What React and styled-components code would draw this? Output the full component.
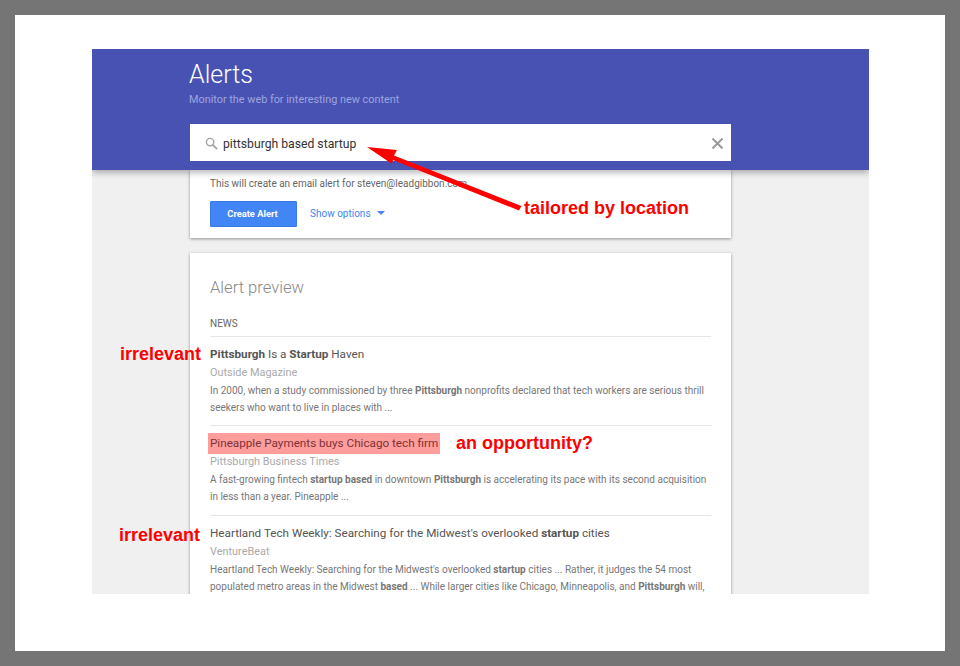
import styled, { createGlobalStyle } from 'styled-components'

const GlobalStyle = createGlobalStyle`
    html, body {
        margin: 0;
        padding: 0;
        background: #757575;
    }
    body {
        font-family: Roboto, "Liberation Sans", sans-serif;
    }
`

const items = [
    {
        title: <><b>Pittsburgh</b> Is a <b>Startup</b> Haven</>,
        source: 'Outside Magazine',
        text: <>In 2000, when a study commissioned by three <b>Pittsburgh</b> nonprofits declared that tech workers are serious thrill<br />seekers who want to live in places with ...</>,
        note: 'irrelevant',
        noteLeft: -90,
        noteTop: 7,
    },
    {
        title: 'Pineapple Payments buys Chicago tech firm',
        source: 'Pittsburgh Business Times',
        text: <>A fast-growing fintech <b>startup based</b> in downtown <b>Pittsburgh</b> is accelerating its pace with its second acquisition<br />in less than a year. Pineapple ...</>,
        highlight: true,
    },
    {
        title: <>Heartland Tech Weekly: Searching for the Midwest's overlooked <b>startup</b> cities</>,
        source: 'VentureBeat',
        text: <>Heartland Tech Weekly: Searching for the Midwest's overlooked <b>startup</b> cities ... Rather, it judges the 54 most<br />populated metro areas in the Midwest <b>based</b> ... While larger cities like Chicago, Minneapolis, and <b>Pittsburgh</b> will,</>,
        note: 'irrelevant',
        noteLeft: -91,
        noteTop: 9,
    },
]

const App = () => {
    return <Page>
        <GlobalStyle />
        <Sheet>
            <Shot>
                <Header>
                    <Title>Alerts</Title>
                    <Subtitle>Monitor the web for interesting new content</Subtitle>
                    <SearchBar>
                        <svg width="13" height="13" viewBox="0 0 14 14" fill="none" stroke="#a3a3a3">
                            <circle cx="5.5" cy="5.5" r="4" strokeWidth="1.5" />
                            <path d="M8.5 8.5 L13 13" strokeWidth="2" />
                        </svg>
                        <SearchText>pittsburgh based startup</SearchText>
                        <svg width="11" height="11" viewBox="0 0 11 11" stroke="#9a9a9a" strokeWidth="2">
                            <path d="M0.5 0.5 L10.5 10.5 M10.5 0.5 L0.5 10.5" />
                        </svg>
                    </SearchBar>
                </Header>
                <Body>
                    <OptionsCard>
                        <EmailLine>This will create an email alert for steven@leadgibbon.com</EmailLine>
                        <Actions>
                            <CreateButton>Create Alert</CreateButton>
                            <OptionsLink>Show options<Caret /></OptionsLink>
                        </Actions>
                    </OptionsCard>
                    <PreviewCard>
                        <PreviewTitle>Alert preview</PreviewTitle>
                        <Section>NEWS</Section>
                        {items.map((item) => (
                            <Item key={item.source}>
                                <ItemTitle $highlight={item.highlight}>{item.title}</ItemTitle>
                                {item.note && <SideNote $left={item.noteLeft} $top={item.noteTop}>{item.note}</SideNote>}
                                {item.highlight && <Opportunity>an opportunity?</Opportunity>}
                                <Source>{item.source}</Source>
                                <Snippet>{item.text}</Snippet>
                            </Item>
                        ))}
                    </PreviewCard>
                </Body>
            </Shot>
            <Arrow width="170" height="70" viewBox="0 0 170 70">
                <path d="M1 1 L31 4 L28 9.5 L155.5 60 L153 64.5 L27 14 L26 18 Z" fill="#ff0000" />
            </Arrow>
            <LocationNote>tailored by location</LocationNote>
        </Sheet>
    </Page>
}

const Page = styled.div`
    height: 666px;
    padding: 15px;
    box-sizing: border-box;
    overflow: hidden;
`

const Sheet = styled.div`
    position: relative;
    height: 636px;
    padding: 34px 76px 0 77px;
    box-sizing: border-box;
    background: #fff;
`

const Shot = styled.div`
    height: 545px;
    overflow: hidden;
    display: flex;
    flex-direction: column;
    background: #f0f0f0;
`

const Header = styled.header`
    position: relative;
    z-index: 1;
    height: 121px;
    flex: none;
    padding: 11px 0 0 97px;
    box-sizing: border-box;
    background: #4852b2;
    box-shadow: 0 3px 6px rgba(0, 0, 0, 0.28);
`

const Title = styled.h1`
    margin: 0;
    font-size: 25px;
    line-height: 30px;
    font-weight: 300;
    color: #fff;
`

const Subtitle = styled.p`
    margin: 2px 0 0;
    font-size: 10.85px;
    line-height: 16px;
    color: #9ea5e0;
`

const SearchBar = styled.div`
    display: flex;
    align-items: center;
    width: 541px;
    height: 37px;
    margin: 16px 0 0 1px;
    padding: 2px 8px 0 15px;
    box-sizing: border-box;
    background: #fff;
`

const SearchText = styled.span`
    flex: 1;
    margin-left: 5px;
    font-size: 12.2px;
    color: #333;
`

const Body = styled.main`
    display: flex;
    flex-direction: column;
    gap: 15px;
    padding-left: 98px;
`

const Card = styled.section`
    width: 541px;
    padding: 0 20px;
    box-sizing: border-box;
    flex: none;
    background: #fff;
    box-shadow: 0 1px 3px rgba(0, 0, 0, 0.4);
`

const OptionsCard = styled(Card)`
    height: 68px;
    padding-top: 7px;
`

const EmailLine = styled.p`
    margin: 0;
    font-size: 10px;
    line-height: 14px;
    color: #666;
`

const Actions = styled.div`
    display: flex;
    align-items: center;
    gap: 13px;
    margin-top: 10px;
`

const CreateButton = styled.button`
    width: 87px;
    height: 26px;
    padding: 0 2px 2px 0;
    border: 1px solid #3b78e7;
    border-radius: 1px;
    background: #4285f4;
    color: #fff;
    font-family: inherit;
    font-size: 9.3px;
    font-weight: 700;
`

const OptionsLink = styled.span`
    display: flex;
    align-items: center;
    gap: 6px;
    padding-bottom: 2px;
    font-size: 10px;
    color: #4285f4;
`

const Caret = styled.i`
    width: 0;
    height: 0;
    border: 4px solid transparent;
    border-top-color: #4285f4;
    border-bottom: 0;
`

const PreviewCard = styled(Card)`
    padding-top: 25px;
`

const PreviewTitle = styled.h2`
    margin: 0;
    font-size: 16.6px;
    line-height: 20px;
    font-weight: 300;
    color: #888;
`

const Section = styled.div`
    margin-top: 19px;
    padding-bottom: 6px;
    font-size: 10px;
    line-height: 13px;
    color: #666;
`

const Item = styled.article`
    position: relative;
    height: 90px;
    padding-top: 8px;
    box-sizing: border-box;
    border-top: 1px solid #e6e6e6;
    &:first-of-type {
        height: 89px;
    }
`

const ItemTitle = styled.h3`
    width: fit-content;
    margin: 0;
    font-size: 11.7px;
    line-height: 18px;
    font-weight: 400;
    color: #555;
    ${({ $highlight }) => $highlight && `
        margin: -1px 0 -2px -2px;
        padding: 0 2px;
        height: 21px;
        line-height: 20px;
        background: #ff9d9d;
        color: #7a3338;
    `}
`

const Source = styled.div`
    margin-top: 1px;
    font-size: 10.9px;
    line-height: 18px;
    color: #aaa;
`

const Snippet = styled.p`
    margin: 0;
    font-size: 10px;
    line-height: 17px;
    color: #777;
`

const Annotation = styled.span`
    position: absolute;
    font-family: "Liberation Sans", Arial, sans-serif;
    font-size: 18px;
    line-height: 20px;
    font-weight: 700;
    color: #f00;
    white-space: nowrap;
`

const SideNote = styled(Annotation)`
    left: ${({ $left }) => $left}px;
    top: ${({ $top }) => $top}px;
`

const Opportunity = styled(Annotation)`
    left: 246px;
    top: 7px;
`

const LocationNote = styled(Annotation)`
    left: 509px;
    top: 183px;
`

const Arrow = styled.svg`
    position: absolute;
    left: 351px;
    top: 131px;
    z-index: 2;
`

export default App
